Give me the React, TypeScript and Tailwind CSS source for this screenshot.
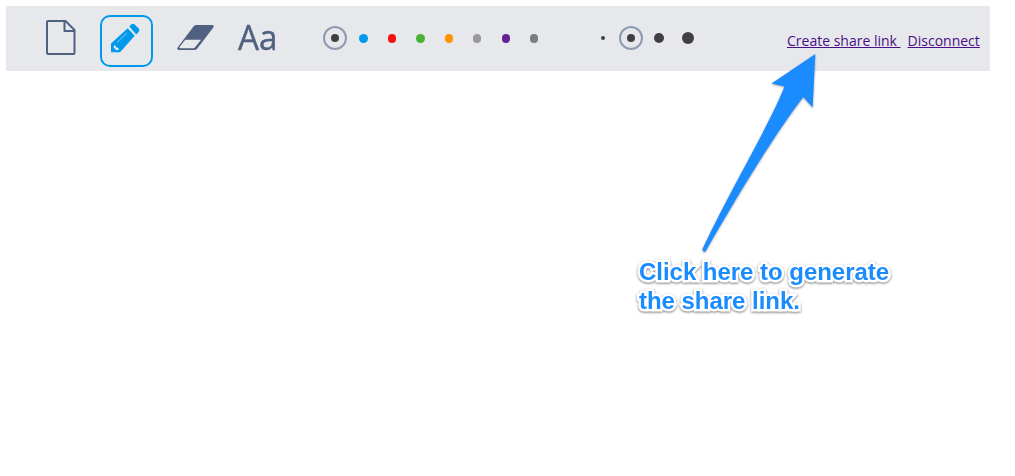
const colors = [
  { name: 'blue', cls: 'w-[9px] bg-[#0099ec]' },
  { name: 'red', cls: 'w-2 bg-[#f21313]' },
  { name: 'green', cls: 'w-[9px] bg-[#48b232]' },
  { name: 'orange', cls: 'w-2 bg-[#ff9400]' },
  { name: 'grey', cls: 'w-2 bg-[#999999]' },
  { name: 'purple', cls: 'w-2 bg-[#662294]' },
  { name: 'slate', cls: 'w-2 bg-[#76807b]' },
];

function PageIcon() {
  return (
    <svg width="30" height="35" viewBox="0 0 30 35" fill="none" stroke="#4f6080" strokeWidth="2" strokeLinejoin="round">
      <path d="M2 1H19.500L28.500 10V33a1 1 0 0 1-1 1H2a1 1 0 0 1-1-1V2A1 1 0 0 1 2 1Z" />
      <path d="M18.500 1v10H28" />
    </svg>
  );
}

function PencilIcon() {
  return (
    <svg width="30" height="30" viewBox="0 0 30 30">
      <path fill="#0099ec" d="M18.300 3.600 20.200 1.600Q21.900.1 23.600 1.600L27.700 5.600Q29.200 7.300 27.700 9L25.200 11.400Z" />
      <path fill="#0099ec" d="M16.700 5.200 23.700 12.800 9 29.300H0V20.500Z" />
      <path fill="#e6e8ec" d="M3 22.300 4.600 22.700 5 24.200 6.900 24.700 8 26.400 6.300 27.300 4.800 26.800 2.600 24.300Z" />
      <path stroke="#e6e8ec" strokeWidth=".6" d="M6 19.500 15.800 10" />
    </svg>
  );
}

function EraserIcon() {
  return (
    <svg width="38" height="26" viewBox="0 0 38 26">
      <path fill="#4f6080" d="M19.500 0H35Q37.500.2 36.300 2.500L20.300 23.500Q19 25 17.300 25H1.800Q-.5 24.500.6 22.400L16.500 1.400Q17.700 0 19.500 0Z" />
      <path fill="#e6e8ec" d="M8.300 14.800H24L18.300 22Q17.500 23.200 16.300 23.200H3.300Q1.800 23.100 2.500 22Z" />
    </svg>
  );
}

function Ring() {
  return (
    <span className="flex size-6 items-center justify-center rounded-full border-2 border-[#8e9ab0]">
      <span className="size-2 rounded-full bg-[#404040]" />
    </span>
  );
}

function Toolbar() {
  return (
    <header className="flex h-[65px] w-[984px] bg-[#e6e8ec]">
      <button className="ml-[40px] mt-[14px] h-[35px]" aria-label="New page"><PageIcon /></button>
      <button className="ml-6 mt-[9px] flex h-[52px] w-[53px] rounded-[10px] border-2 border-[#0099ec] pl-[9px] pt-[6px]" aria-label="Pencil"><PencilIcon /></button>
      <button className="ml-6 mt-[19px] h-[26px]" aria-label="Eraser"><EraserIcon /></button>
      <button className="ml-[23px] mt-[7px] h-12 w-[85px] origin-left scale-x-95 text-left font-['Open_Sans',sans-serif] text-[35px] leading-[48px] text-[#4f6080] [-webkit-text-stroke:0.4px_#4f6080]">Aa</button>
      <div className="mt-[20px] flex h-6 w-[280px] items-center">
        <Ring />
        <div className="ml-[2px] flex">
          {colors.map((c) => (
            <span key={c.name} className="flex w-[28.5px] justify-center">
              <span className={`mt-px h-[9px] rounded-full ${c.cls}`} />
            </span>
          ))}
        </div>
      </div>
      <div className="-ml-[2px] mt-[20px] flex h-6 w-[186px] items-center">
        <span className="mr-[14px] size-1 rounded-full bg-[#404040]" />
        <Ring />
        <span className="ml-[11px] size-[10px] rounded-full bg-[#404040]" />
        <span className="ml-[18px] size-3 rounded-full bg-[#404040]" />
      </div>
      <nav className="mt-[25px] flex gap-[7px] whitespace-pre font-['Open_Sans',sans-serif] text-[14px] leading-5 text-[#4b0e87]">
        <a href="#share" className="underline">{'Create share link '}</a>
        <a href="#disconnect" className="underline">Disconnect</a>
      </nav>
    </header>
  );
}

export default function App() {
  return (
    <main className="relative h-[476px] w-[1015px] overflow-hidden bg-white p-[6px]">
      <Toolbar />
      <svg className="absolute left-[690px] top-[40px] drop-shadow-[0_1.500px_1px_rgba(0,0,0,0.35)]" width="140" height="220" viewBox="0 0 140 220">
        <path fill="#1a8cff" d="M125.300 14 81.500 43.500 94.500 46.500C78 88 40 150 12.500 209Q12.500 212.500 15.500 211.500C45 160 82 98 113.300 57L122.700 67.500Z" />
      </svg>
      <p className="absolute left-[639px] top-[257px] whitespace-pre font-['Liberation_Sans',Arial,sans-serif] text-[24px] font-bold leading-[29px] tracking-[-0.03px] text-[#1a8cff] [-webkit-text-stroke:5px_white] [filter:drop-shadow(0_1.5px_1px_rgba(0,0,0,0.5))] [paint-order:stroke_fill] [stroke-linejoin:round]">
        {'Click here to generate\nthe share link.'}
      </p>
    </main>
  );
}
